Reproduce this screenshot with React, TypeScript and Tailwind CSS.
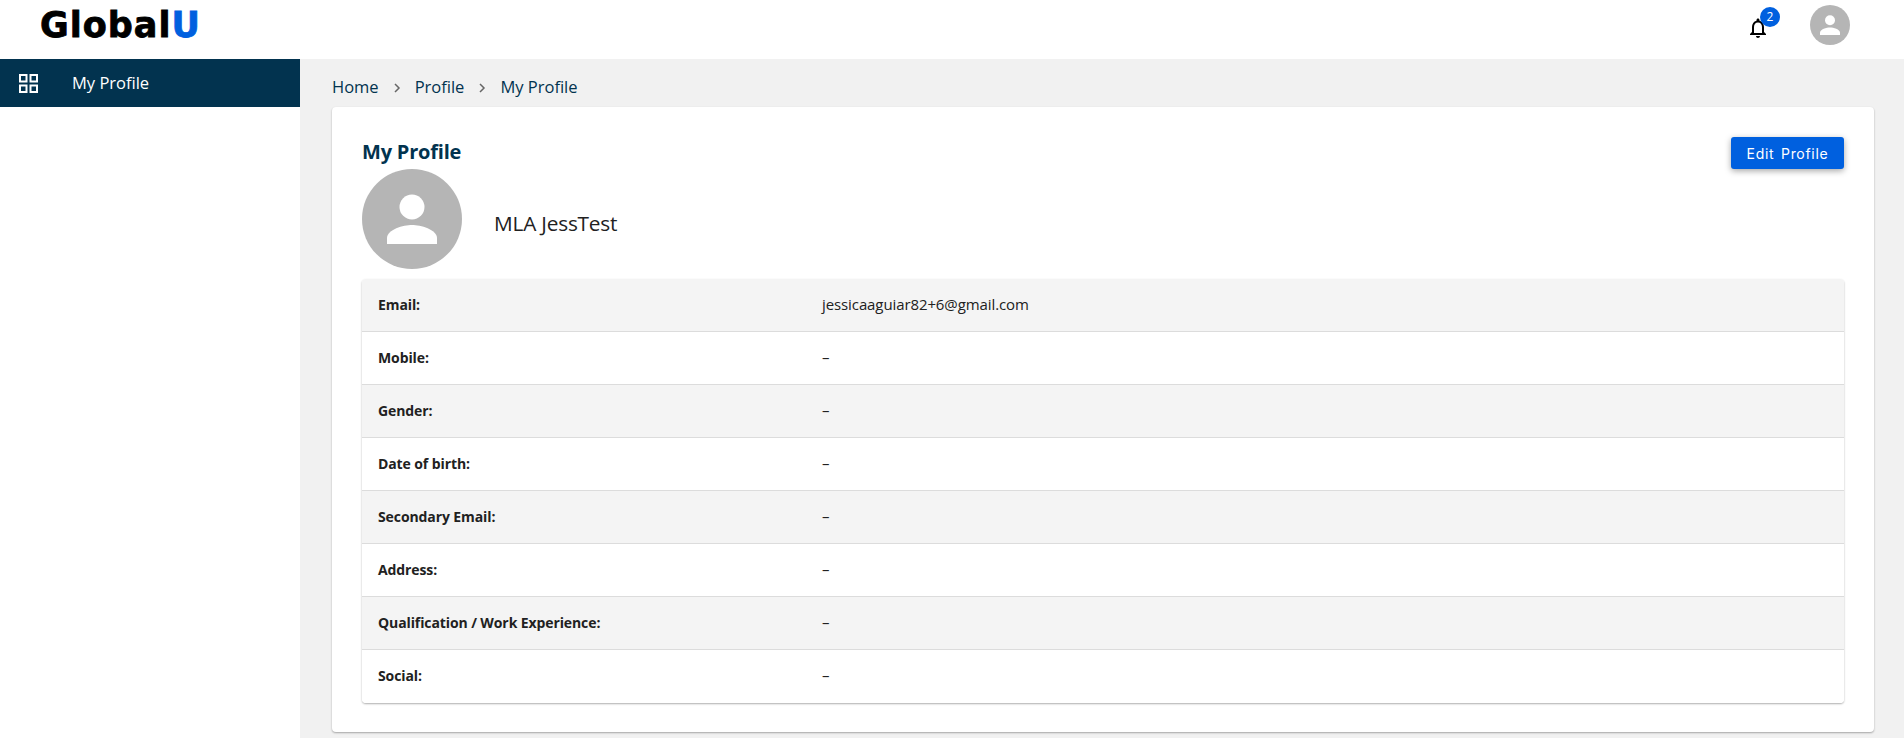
const rows = [
  ["Email:", "jessicaaguiar82+6@gmail.com"],
  ["Mobile:", "–"],
  ["Gender:", "–"],
  ["Date of birth:", "–"],
  ["Secondary Email:", "–"],
  ["Address:", "–"],
  ["Qualification / Work Experience:", "–"],
  ["Social:", "–"],
];

function Person({ size }: { size: number }) {
  return (
    <svg width={size} height={size} viewBox="0 0 100 100" className="block">
      <circle cx="50" cy="50" r="50" fill="#b5b5b5" />
      <circle cx="50" cy="38" r="12.5" fill="#fff" />
      <path d="M25 75v-6c0-8.500 16.500-13 25-13s25 4.500 25 13v6z" fill="#fff" />
    </svg>
  );
}

export default function App() {
  return (
    <div className="w-[1904px] h-[738px] overflow-hidden bg-[#f1f1f1] font-['Open_Sans',sans-serif] flex flex-col">
      <header className="h-[59px] shrink-0 bg-white flex items-start justify-between pl-[40px] pr-[54px]">
        <div className="mt-[6px] h-[38px] flex items-center font-['DejaVu_Sans',sans-serif] font-bold text-[35px] leading-none tracking-[1px] text-black [-webkit-text-stroke:0.8px_currentColor]">
          Global<span className="text-[#0060df]">U</span>
        </div>
        <div className="flex items-start mt-[5px]">
          <div className="relative w-[24px] h-[24px] ml-[1px] mr-[40px] mt-[11px]">
            <svg width="24" height="24" viewBox="0 0 24 24" className="block" fill="none">
              <path d="M12 22c1.100 0 2-.9 2-2h-4c0 1.100.9 2 2 2zm6-6v-5c0-3.070-1.630-5.640-4.500-6.320V4c0-.83-.67-1.500-1.500-1.500s-1.500.67-1.500 1.500v.68C7.640 5.360 6 7.920 6 11v5l-2 2v1h16v-1l-2-2zm-2 1H8v-6c0-2.480 1.510-4.500 4-4.500s4 2.020 4 4.500v6z" fill="#000" />
            </svg>
            <span className="absolute -top-[9px] left-[14px] w-[20px] h-[20px] rounded-full bg-[#0060df] text-white text-[12px] font-medium leading-[20px] text-center">2</span>
          </div>
          <Person size={40} />
        </div>
      </header>

      <div className="flex flex-1 min-h-0">
        <aside className="w-[300px] shrink-0 bg-white">
          <div className="h-[48px] bg-[#02334f] flex items-center pl-[19px] text-white">
            <svg width="19" height="19" viewBox="0 0 19 19" fill="none" stroke="#fff" strokeWidth="2" className="block">
              <rect x="1" y="1" width="6.500" height="6.500" />
              <rect x="11.500" y="1" width="6.500" height="6.500" />
              <rect x="1" y="11.500" width="6.500" height="6.500" />
              <rect x="11.500" y="11.500" width="6.500" height="6.500" />
            </svg>
            <span className="ml-[34px] text-[16.500px]">My Profile</span>
          </div>
        </aside>

        <main className="flex-1 pl-[32px] pr-[30px] flex flex-col">
          <nav className="h-[48px] pt-[9px] flex items-center text-[16.500px] text-[#02334f]">
            <span>Home</span>
            <svg width="16" height="16" viewBox="0 0 16 16" fill="none" stroke="#666" strokeWidth="1.500" className="mx-[10px]">
              <path d="M6 4l4 4-4 4" />
            </svg>
            <span>Profile</span>
            <svg width="16" height="16" viewBox="0 0 16 16" fill="none" stroke="#666" strokeWidth="1.500" className="mx-[10px]">
              <path d="M6 4l4 4-4 4" />
            </svg>
            <span>My Profile</span>
          </nav>

          <section className="h-[625px] bg-white rounded-[4px] shadow-[0_1px_2px_rgba(0,0,0,0.32)] px-[30px] pt-[30px]">
            <div className="flex items-start justify-between h-[32px]">
              <h1 className="mt-[1px] text-[20px] leading-[28px] font-bold text-[#02334f] tracking-[-0.2px]">My Profile</h1>
              <button className="w-[113px] h-[32px] rounded-[3px] bg-[#0060df] text-white text-[14px] font-['Inter',sans-serif] tracking-[0.7px] [word-spacing:2px] shadow-[0_2px_6px_rgba(0,0,0,0.35)]">
                Edit Profile
              </button>
            </div>
            <div className="flex items-center">
              <Person size={100} />
              <span className="ml-[32px] mt-[9px] text-[20.800px] text-[#212121] tracking-[-0.2px]">MLA JessTest</span>
            </div>
            <div className="mt-[10px] rounded-[4px] overflow-hidden shadow-[0_1px_2px_rgba(0,0,0,0.32)]">
              {rows.map(([label, value], i) => (
                <div
                  key={label}
                  className={`h-[53px] flex items-center pb-[2px] text-[#212121] ${i % 2 === 0 ? "bg-[#f4f4f4]" : "bg-white"} ${i < rows.length - 1 ? "border-b border-[#dcdcdc]" : ""}`}
                >
                  <span className="w-[460px] pl-[16px] text-[14px] font-bold tracking-[-0.1px]">{label}</span>
                  <span className="text-[15px] tracking-[-0.1px]">{value}</span>
                </div>
              ))}
            </div>
          </section>
        </main>
      </div>
    </div>
  );
}
